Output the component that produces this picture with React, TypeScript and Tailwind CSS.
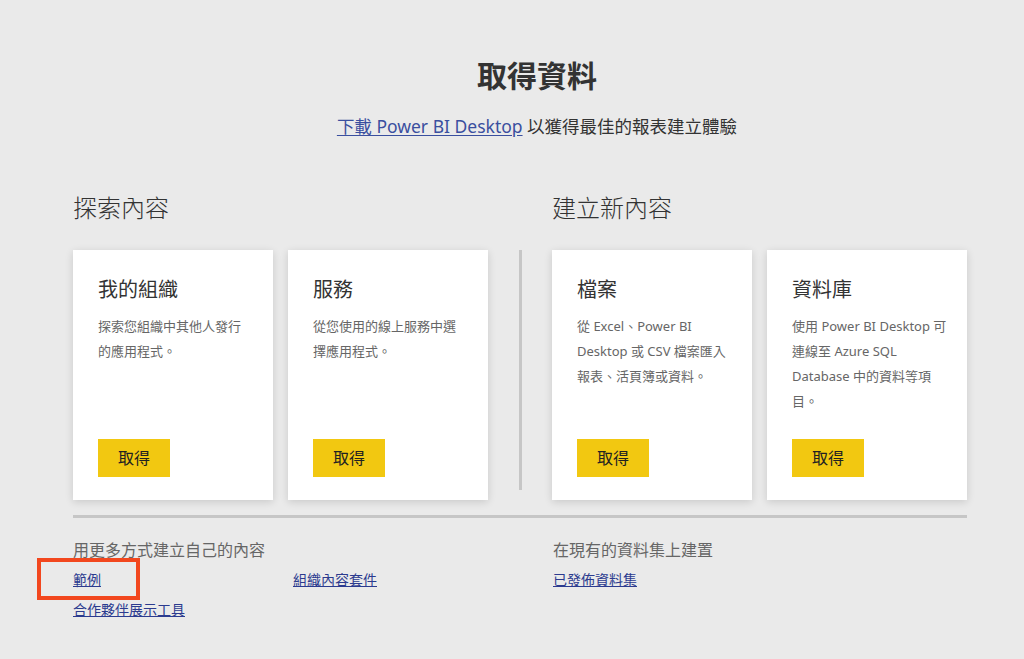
import React from 'react';

const font = { fontFamily: '"Noto Sans", "Noto Sans CJK TC", sans-serif' };

type CardProps = { title: string; text: React.ReactNode };

function SourceCard({ title, text }: CardProps) {
  return (
    <div className="flex h-[250px] w-[200px] flex-col bg-white px-[25px] pt-[26px] pb-[23px] shadow-[0_2px_8px_rgba(0,0,0,0.14)]">
      <h3 className="text-[20px] leading-[28px] text-[#333]">{title}</h3>
      <p className="mt-[10px] whitespace-nowrap text-[13px] leading-[25px] text-[#666]">{text}</p>
      <button className="mt-auto h-[38px] w-[72px] bg-[#f2c811] text-[16px] text-[#222]">取得</button>
    </div>
  );
}

export default function App() {
  return (
    <div className="min-h-screen bg-[#eaeaea] text-[#333]" style={font}>
      <div className="pt-[56px] pl-[50px] text-center">
        <h1 className="text-[30px] font-bold leading-[40px] text-[#333]">取得資料</h1>
        <p className="mt-[17px] text-[17.5px] leading-[26px] text-[#333]">
          <a href="#" className="text-[#3a4f9f] underline underline-offset-2">下載 Power BI Desktop</a> 以獲得最佳的報表建立體驗
        </p>
      </div>

      <div className="ml-[73px] w-[894px]">
        <div className="mt-[53px] flex justify-between">
          <h2 className="w-[415px] text-[24px] font-light leading-[32px]">探索內容</h2>
          <h2 className="w-[415px] text-[24px] font-light leading-[32px]">建立新內容</h2>
        </div>

        <div className="mt-[26px] flex items-start">
          <div className="flex gap-[15px]">
            <SourceCard title="我的組織" text={<>探索您組織中其他人發行<br />的應用程式。</>} />
            <SourceCard title="服務" text={<>從您使用的線上服務中選<br />擇應用程式。</>} />
          </div>
          <div className="ml-[31px] mr-[30px] h-[240px] w-[3px] bg-[#c6c6c6]" />
          <div className="flex gap-[15px]">
            <SourceCard title="檔案" text={<>從 Excel、Power BI<br />Desktop 或 CSV 檔案匯入<br />報表、活頁簿或資料。</>} />
            <SourceCard title="資料庫" text={<>使用 Power BI Desktop 可<br />連線至 Azure SQL<br />Database 中的資料等項<br />目。</>} />
          </div>
        </div>

        <div className="mt-[15px] h-[3px] w-full bg-[#c6c6c6]" />

        <div className="mt-[21px] flex">
          <div className="w-[480px]">
            <p className="text-[16px] leading-[22px] text-[#666]">用更多方式建立自己的內容</p>
            <div className="mt-[9px] grid grid-cols-[220px_auto] gap-y-[10px] text-[14px] leading-[20px]">
              <div className="relative">
                <a href="#" className="text-[#2c3b8f] underline">範例</a>
                <div className="absolute left-[-36px] top-[-12px] h-[42px] w-[103px] border-4 border-[#f2471e]" />
              </div>
              <a href="#" className="text-[#2c3b8f] underline">組織內容套件</a>
              <a href="#" className="text-[#2c3b8f] underline">合作夥伴展示工具</a>
            </div>
          </div>
          <div>
            <p className="text-[16px] leading-[22px] text-[#666]">在現有的資料集上建置</p>
            <div className="mt-[9px] text-[14px] leading-[20px]">
              <a href="#" className="text-[#2c3b8f] underline">已發佈資料集</a>
            </div>
          </div>
        </div>
      </div>
    </div>
  );
}
